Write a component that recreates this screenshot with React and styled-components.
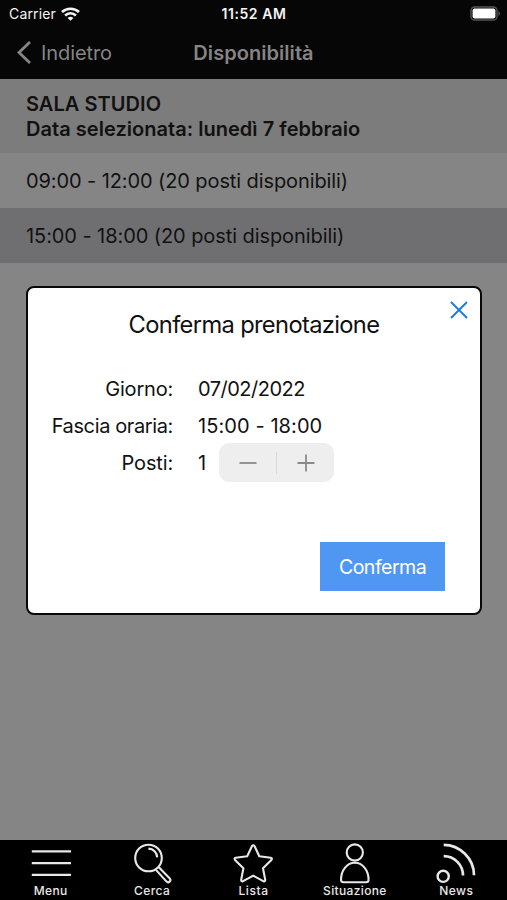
import React from "react";
import styled, { createGlobalStyle } from "styled-components";

const GlobalStyle = createGlobalStyle`
  *, *::before, *::after { box-sizing: border-box; }
  body { margin: 0; font-family: Inter, "Liberation Sans", sans-serif; }
  button { font: inherit; border: 0; padding: 0; background: none; }
  svg { display: block; }
`;

const Screen = styled.div`
  position: relative;
  width: 507px;
  height: 900px;
  display: flex;
  flex-direction: column;
  overflow: hidden;
  background: #858585;
  color: #111;
`;

const StatusBar = styled.div`
  height: 27px;
  display: grid;
  grid-template-columns: 1fr auto 1fr;
  align-items: center;
  padding: 0 6px 0 9px;
  background: #060606;
  color: #f4f4f4;
  font-size: 14px;
  line-height: 27px;
`;

const Carrier = styled.div`
  display: flex;
  align-items: center;
  gap: 5px;
  letter-spacing: 0.15px;
`;

const Clock = styled.div`
  font-size: 14px;
  font-weight: 600;
  letter-spacing: 0.55px;
  margin-right: 2px;
`;

const BatterySlot = styled.div`
  display: flex;
  justify-content: flex-end;
`;

const NavBar = styled.header`
  height: 52px;
  display: grid;
  grid-template-columns: 1fr auto 1fr;
  align-items: center;
  padding: 0 16px;
  background: #060606;
  color: #858585;
`;

const BackButton = styled.button`
  display: flex;
  align-items: center;
  gap: 9px;
  color: inherit;
  font-size: 20px;
  letter-spacing: ${(p) => p.$tracking}px;
`;

const NavTitle = styled.h1`
  margin: 0;
  font-size: 20px;
  font-weight: 600;
  letter-spacing: ${(p) => p.$tracking}px;
`;

const SectionHeader = styled.div`
  height: 74px;
  padding: 13px 26px 0;
  background: #7c7c7c;
  font-size: 20px;
  font-weight: 600;
  line-height: 25px;
`;

const Line = styled.div`
  letter-spacing: ${(p) => p.$tracking}px;
  white-space: nowrap;
`;

const SlotRow = styled.div`
  height: ${(p) => p.$height}px;
  display: flex;
  align-items: center;
  padding: 0 26px;
  font-size: 20px;
  letter-spacing: ${(p) => p.$tracking}px;
  white-space: nowrap;
  background: ${(p) => (p.$selected ? "#6f6f72" : "#858585")};
`;

const Spacer = styled.div`
  flex: 1;
`;

const TabBar = styled.nav`
  height: 60px;
  display: grid;
  grid-template-columns: repeat(5, 1fr);
  background: #000;
  color: #e8e8e8;
`;

const Tab = styled.button`
  display: flex;
  flex-direction: column;
  align-items: center;
  padding-top: 2px;
  color: inherit;
`;

const TabLabel = styled.span`
  font-size: 12px;
  font-weight: 550;
  line-height: 14px;
  letter-spacing: ${(p) => p.$tracking}px;
`;

const Dialog = styled.section`
  position: absolute;
  left: 26px;
  top: 286px;
  width: 456px;
  height: 329px;
  display: flex;
  flex-direction: column;
  border: 2.5px solid #080808;
  border-radius: 8px;
  background: #fff;
`;

const CloseButton = styled.button`
  position: absolute;
  right: 12px;
  top: 13px;
  color: #167ce8;
`;

const DialogTitle = styled.h2`
  margin: 21px 0 0;
  font-size: 23.7px;
  font-weight: 400;
  line-height: 32px;
  text-align: center;
  letter-spacing: ${(p) => p.$tracking}px;
`;

const Details = styled.dl`
  display: grid;
  grid-template-columns: 145px auto;
  grid-auto-rows: 37px;
  column-gap: 25px;
  align-items: center;
  margin: 29px 0 0;
  font-size: 20px;
`;

const Term = styled.dt`
  text-align: right;
  white-space: nowrap;
  letter-spacing: ${(p) => p.$tracking}px;
`;

const Value = styled.dd`
  display: flex;
  align-items: center;
  margin: 0;
  white-space: nowrap;
  letter-spacing: ${(p) => p.$tracking}px;
`;

const Count = styled.span`
  width: 21px;
`;

const Stepper = styled.div`
  width: 115px;
  height: 39px;
  display: grid;
  grid-template-columns: 1fr 1px 1fr;
  align-items: center;
  justify-items: center;
  border-radius: 10px;
  background: #eeeeef;
  color: #8a8a8a;
`;

const StepDivider = styled.span`
  width: 1px;
  height: 22px;
  background: #d8d8d9;
`;

const ConfirmButton = styled.button`
  width: 125px;
  height: 49px;
  margin: auto 35px 22px auto;
  background: #4f97f3;
  color: #fff;
  font-size: 19.6px;
  letter-spacing: ${(p) => p.$tracking}px;
`;

const WifiIcon = () => (
  <svg width="19" height="14" viewBox="0 0 19 14" fill="none" stroke="currentColor" strokeWidth="2.7">
    <path d="M1 5.1C5.8.6 13.2.6 18 5.1" />
    <path d="M4.1 8.4c3.1-2.9 7.7-2.9 10.8 0" />
    <path d="M9.5 13.8 6.6 10.9c1.7-1.5 4.1-1.5 5.8 0z" fill="currentColor" stroke="none" />
  </svg>
);

const BatteryIcon = () => (
  <svg width="31" height="15" viewBox="0 0 31 15">
    <rect x="1" y="1" width="26" height="13" rx="3.6" fill="none" stroke="#555" strokeWidth="1.4" />
    <rect x="2.6" y="2.6" width="22.8" height="9.8" rx="2" fill="#fff" />
    <path d="M28.4 5.1c2 .8 2 4 0 4.8z" fill="#555" />
  </svg>
);

const BackIcon = () => (
  <svg width="16" height="24" viewBox="0 0 16 24" fill="none" stroke="currentColor" strokeWidth="2.8">
    <path d="M14 1 3 11.5 14 22" />
  </svg>
);

const CloseIcon = () => (
  <svg width="18" height="18" viewBox="0 0 18 18" fill="none" stroke="currentColor" strokeWidth="1.9">
    <path d="m1 1 16 16M17 1 1 17" />
  </svg>
);

const StepIcon = ({ plus }) => (
  <svg width="18" height="18" viewBox="0 0 18 18" fill="none" stroke="currentColor" strokeWidth="1.8">
    <path d={plus ? "M.5 9h17M9 .5v17" : "M.5 9h17"} />
  </svg>
);

const TabIcon = ({ children }) => (
  <svg width="46" height="42" viewBox="0 0 46 42" fill="none" stroke="currentColor" strokeWidth="2.1" strokeLinejoin="round">
    {children}
  </svg>
);

const tabs = [
  {
    label: "Menu",
    tracking: 0.4,
    icon: <path d="M3.8 9.4h39.2M3.8 21.2h39.2M3.8 32.9h39.2" strokeWidth="2.2" />,
  },
  {
    label: "Cerca",
    tracking: 0.4,
    icon: (
      <>
        <circle cx="19.5" cy="16" r="13.3" />
        <path d="M19.4 6.6c5 .1 8.6 4 8.8 8.8" />
        <path d="m26.7 27.6 10.9 12c2 1.9 5-.8 3.2-3L29.6 24.9" />
      </>
    ),
  },
  {
    label: "Lista",
    tracking: 0.6,
    icon: (
      <path d="M21.9 4.2q1.4-2 2.7 0l4.7 10 11.4 1.6q2 .4.7 2.2l-8.4 8.3 2.2 11.5q.1 2.2-1.9 1.4l-10-5.5-10.2 5.5q-2 .6-1.9-1.4l2.2-11.5L5 18q-1.2-1.8.7-2.2l11.5-1.6z" />
    ),
  },
  {
    label: "Situazione",
    tracking: 0.35,
    icon: (
      <>
        <circle cx="22.8" cy="10.5" r="8.1" />
        <path d="M11.6 40.2q-2.8 0-2.6-2.8c.3-9.2 6-16.6 13.8-16.6S36.3 28.2 36.6 37.4q.2 2.8-2.6 2.8z" />
      </>
    ),
  },
  {
    label: "News",
    tracking: 0.4,
    icon: (
      <>
        <circle cx="10.2" cy="34.3" r="5.6" strokeWidth="2.4" />
        <path d="M10.7 2.8c16.2 0 30.3 13.8 30.3 30.4M10.7 14.2C21.5 14.2 30 22.8 30 33.6" strokeWidth="2.7" />
      </>
    ),
  },
];

export default function App() {
  return (
    <>
      <GlobalStyle />
      <Screen>
        <StatusBar>
          <Carrier>
            <span>Carrier</span>
            <WifiIcon />
          </Carrier>
          <Clock>11:52 AM</Clock>
          <BatterySlot>
            <BatteryIcon />
          </BatterySlot>
        </StatusBar>
        <NavBar>
          <BackButton $tracking={-0.1}>
            <BackIcon />
            <span>Indietro</span>
          </BackButton>
          <NavTitle $tracking={0.05}>Disponibilità</NavTitle>
        </NavBar>
        <SectionHeader>
          <Line $tracking={0.05}>SALA STUDIO</Line>
          <Line $tracking={0.03}>Data selezionata: lunedì 7 febbraio</Line>
        </SectionHeader>
        <SlotRow $height={55} $tracking={-0.1}>09:00 - 12:00 (20 posti disponibili)</SlotRow>
        <SlotRow $height={55} $tracking={-0.08} $selected>15:00 - 18:00 (20 posti disponibili)</SlotRow>
        <Spacer />
        <TabBar>
          {tabs.map((tab) => (
            <Tab key={tab.label}>
              <TabIcon>{tab.icon}</TabIcon>
              <TabLabel $tracking={tab.tracking}>{tab.label}</TabLabel>
            </Tab>
          ))}
        </TabBar>
        <Dialog>
          <CloseButton aria-label="Chiudi">
            <CloseIcon />
          </CloseButton>
          <DialogTitle $tracking={-0.65}>Conferma prenotazione</DialogTitle>
          <Details>
            <Term $tracking={-0.2}>Giorno:</Term>
            <Value $tracking={-0.5}>07/02/2022</Value>
            <Term $tracking={-0.38}>Fascia oraria:</Term>
            <Value $tracking={0.08}>15:00 - 18:00</Value>
            <Term $tracking={-0.15}>Posti:</Term>
            <Value $tracking={0}>
              <Count>1</Count>
              <Stepper>
                <StepIcon />
                <StepDivider />
                <StepIcon plus />
              </Stepper>
            </Value>
          </Details>
          <ConfirmButton $tracking={-0.55}>Conferma</ConfirmButton>
        </Dialog>
      </Screen>
    </>
  );
}
